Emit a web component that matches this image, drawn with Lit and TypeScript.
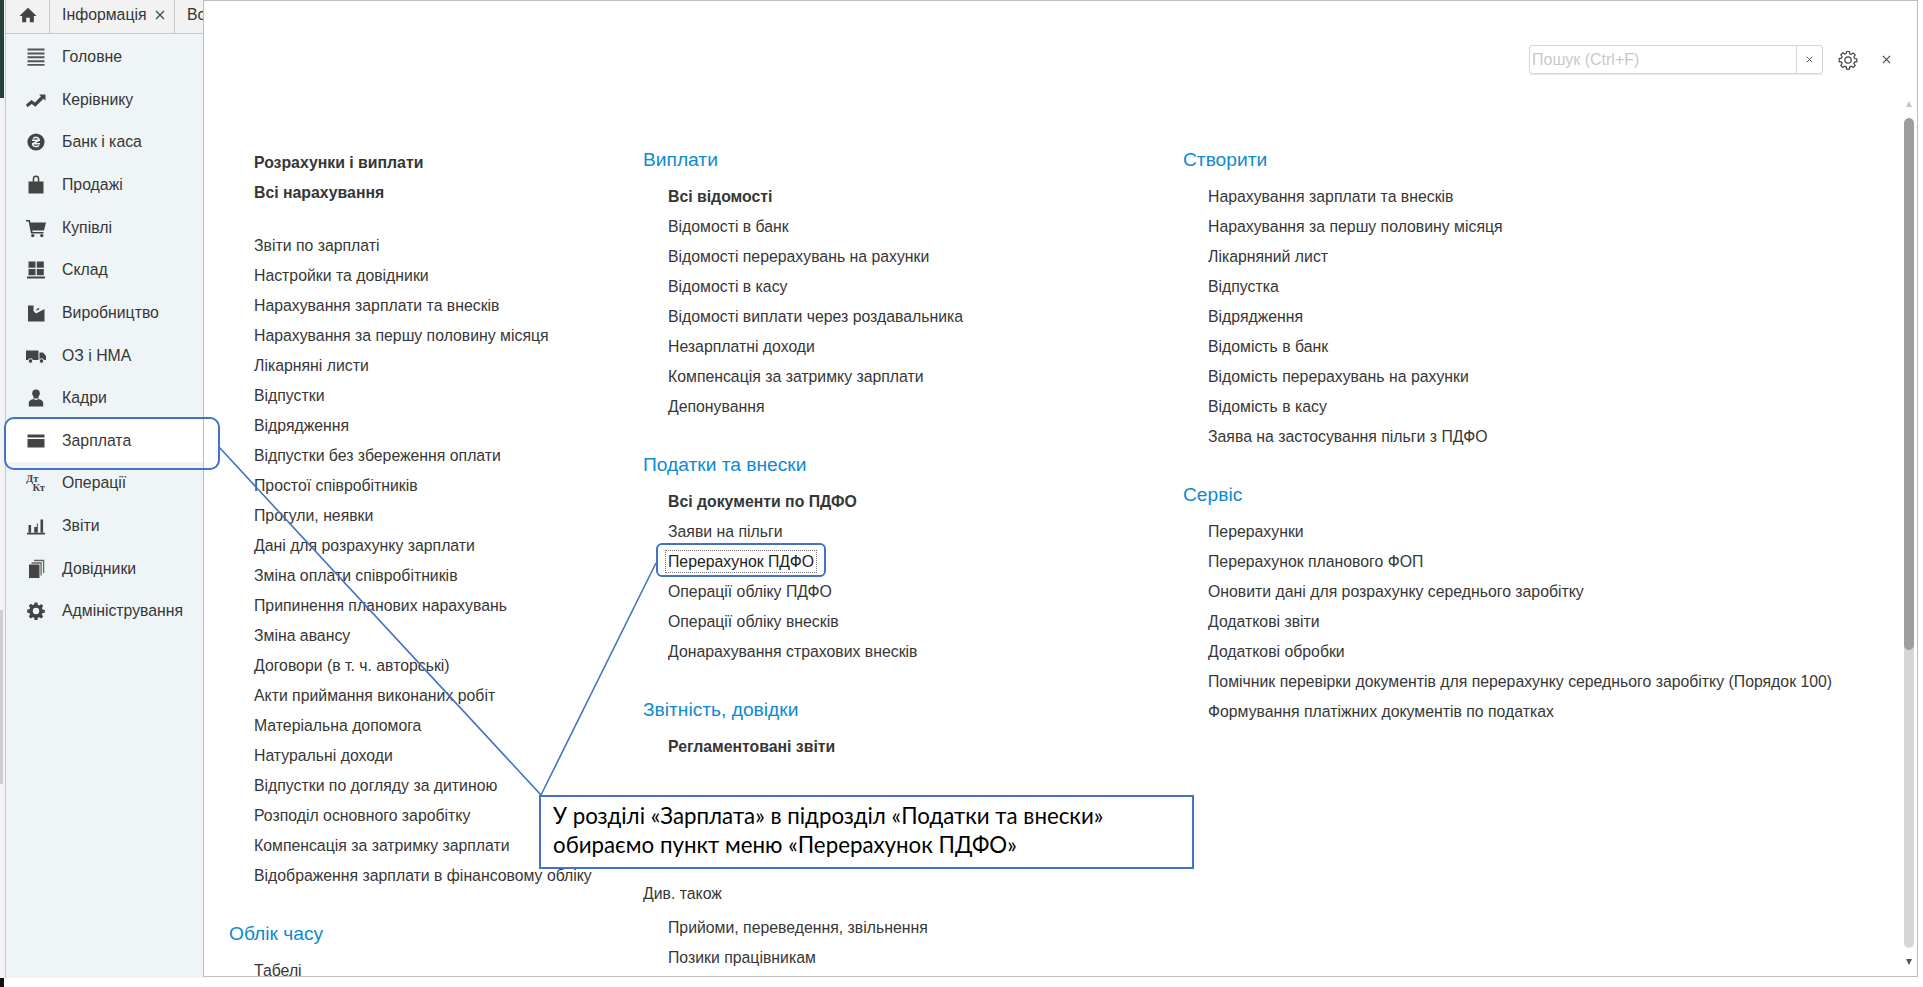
import { LitElement, html, css, svg } from "lit";
import { customElement } from "lit/decorators.js";

type Item = { t: string; b?: boolean; focus?: boolean };
type Group = { h?: string; plain?: string; items: Item[]; cls?: string };

const I = (s: string): Item => ({ t: s });
const B = (s: string): Item => ({ t: s, b: true });

const gearPath = "M8.6 1.5h2.8l.4 2.3 1.5.6 1.9-1.3 2 2-1.3 1.9.6 1.5 2.3.4v2.8l-2.3.4-.6 1.5 1.3 1.9-2 2-1.9-1.3-1.5.6-.4 2.3H8.6l-.4-2.3-1.5-.6-1.9 1.3-2-2 1.3-1.9-.6-1.5-2.3-.4V8.6l2.3-.4.6-1.5-1.3-1.9 2-2 1.9 1.3 1.5-.6z";

const icons: Record<string, unknown> = {
  main: svg`<path d="M1.5 1.5h17v2h-17zM1.5 5.4h17v2h-17zM1.5 9.3h17v2h-17zM1.5 13.2h17v2h-17zM1.5 17h17v1.8h-17z" opacity=".9"/>`,
  trend: svg`<path d="M0 14.5l5.5-4.5 3.5 2.5 6-6.2-2-1.8h6.5v6.3l-2-2-8.2 8-3.6-2.7-4.2 3.2z"/>`,
  bank: svg`<circle cx="10" cy="10" r="8.6"/><path d="M6 8.2h8M6 11.8h8M7.2 6.6c1.4-2 5.8-1.6 5.6 1.2-.2 2.2-5.8 2.2-6 4.6-.1 2.6 4.6 2.8 6.2 1" fill="none" stroke="#eff4f7" stroke-width="1.5"/>`,
  bag: svg`<path d="M2.5 6.5h4.2V3.8a3.3 3.3 0 0 1 6.6 0v2.7h4.2v12h-15zM8.2 6.5h3.6V3.9a1.8 1.8 0 0 0-3.6 0z"/>`,
  cart: svg`<path d="M0 2h3.8l.7 2.4H20l-2 8H6.2l.5 1.6H17.5v1.6H5L2.6 3.6H0z"/><circle cx="6.8" cy="17.6" r="1.7"/><circle cx="15.8" cy="17.6" r="1.7"/>`,
  boxes: svg`<path d="M2.5 1.5h7v6.2h-7zM10.8 1.5h7v6.2h-7zM2.5 9h7v6.2h-7zM10.8 9h7v6.2h-7zM1 16.6h18v1.9H1z"/>`,
  factory: svg`<path d="M2 18.5V2.5h5.5v5.5L10 10.5 18.5 6v12.5z"/><path d="M10.5 6.2l2.6-1.4v1.6l-2.6 1.4z"/>`,
  truck: svg`<path d="M0 4.5h12.5v9.5H0zM13.5 6.5h3.5l3 3.6V14h-6.5z"/><circle cx="4.5" cy="15" r="2.3" stroke="#eff4f7"/><circle cx="15.5" cy="15" r="2.3" stroke="#eff4f7"/>`,
  person: svg`<circle cx="10" cy="5.2" r="3.8"/><path d="M7.5 8h5v2.4h-5zM2.8 18.5v-3.5c0-2.5 2.8-3.6 4.8-4L10 12.2l2.4-1.2c2 .4 4.8 1.5 4.8 4v3.5z"/>`,
  card: svg`<path d="M1.5 3.5h17v3h-17zM1.5 8h17v8.5h-17z"/>`,
  reports: svg`<path d="M2.5 9h2.6v7.5H2.5zM8.2 11h2.6v5.5H8.2zM10.8 7.5h1v9h-1zM14.5 3.5h2.6v13h-2.6zM1 16.8h18v1.6H1z"/>`,
  pages: svg`<path d="M3 5.5h10.5V19H3z"/><path d="M5.5 4h9.6v12.5M8 1.5h9.6V14" fill="none" stroke="#666" stroke-width="1.3"/>`,
  gear: svg`<path fill-rule="evenodd" d="${gearPath} M10 6.8a3.2 3.2 0 1 0 0 6.4 3.2 3.2 0 0 0 0-6.4z"/>`,
  dtkt: svg`<text x="0" y="8.5" class="dk">Дт</text><text x="6.5" y="18" class="dk">Кт</text>`,
};

const nav: [string, string, boolean?][] = [
  ["Головне", "main"], ["Керівнику", "trend"], ["Банк і каса", "bank"], ["Продажі", "bag"],
  ["Купівлі", "cart"], ["Склад", "boxes"], ["Виробництво", "factory"], ["ОЗ і НМА", "truck"],
  ["Кадри", "person"], ["Зарплата", "card", true], ["Операції", "dtkt"], ["Звіти", "reports"],
  ["Довідники", "pages"], ["Адміністрування", "gear"],
];

const col1: Group[] = [
  { items: [B("Розрахунки і виплати"), B("Всі нарахування")], cls: "first" },
  { items: ["Звіти по зарплаті", "Настройки та довідники", "Нарахування зарплати та внесків", "Нарахування за першу половину місяця", "Лікарняні листи", "Відпустки", "Відрядження", "Відпустки без збереження оплати", "Простої співробітників", "Прогули, неявки", "Дані для розрахунку зарплати", "Зміна оплати співробітників", "Припинення планових нарахувань", "Зміна авансу", "Договори (в т. ч. авторські)", "Акти приймання виконаних робіт", "Матеріальна допомога", "Натуральні доходи", "Відпустки по догляду за дитиною", "Розподіл основного заробітку", "Компенсація за затримку зарплати", "Відображення зарплати в фінансовому обліку"].map(I) },
  { h: "Облік часу", items: [I("Табелі")] },
];
const col2: Group[] = [
  { h: "Виплати", items: [B("Всі відомості"), ...["Відомості в банк", "Відомості перерахувань на рахунки", "Відомості в касу", "Відомості виплати через роздавальника", "Незарплатні доходи", "Компенсація за затримку зарплати", "Депонування"].map(I)] },
  { h: "Податки та внески", items: [B("Всі документи по ПДФО"), I("Заяви на пільги"), { t: "Перерахунок ПДФО", focus: true }, I("Операції обліку ПДФО"), I("Операції обліку внесків"), I("Донарахування страхових внесків")] },
  { h: "Звітність, довідки", items: [B("Регламентовані звіти")] },
  { plain: "Див. також", items: [I("Прийоми, переведення, звільнення"), I("Позики працівникам")], cls: "see" },
];
const col3: Group[] = [
  { h: "Створити", items: ["Нарахування зарплати та внесків", "Нарахування за першу половину місяця", "Лікарняний лист", "Відпустка", "Відрядження", "Відомість в банк", "Відомість перерахувань на рахунки", "Відомість в касу", "Заява на застосування пільги з ПДФО"].map(I) },
  { h: "Сервіс", items: ["Перерахунки", "Перерахунок планового ФОП", "Оновити дані для розрахунку середнього заробітку", "Додаткові звіти", "Додаткові обробки", "Помічник перевірки документів для перерахунку середнього заробітку (Порядок 100)", "Формування платіжних документів по податках"].map(I) },
];

@customElement("app-root")
export class AppRoot extends LitElement {
  static styles = css`
    :host { display: block; position: relative; width: 1923px; height: 987px; overflow: hidden; background: #fff;
      font-family: "Liberation Sans", Arial, sans-serif; font-size: 15.82px; color: #363636; }
    .shell { display: flex; height: 987px; }
    .strip { width: 5px; flex: none; height: 978px; display: flex; flex-direction: column; background: #f3f3f3; position: relative; }
    .strip .dark { height: 98px; width: 4px; background: #26403c; }
    .strip .mid { height: 512px; }
    .strip .low { width: 3px; height: 174px; background: #cfcfcf; }
    .strip .end { position: absolute; left: 0; top: 978px; width: 4px; height: 9px; background: #111; }
    .left { width: 198px; flex: none; display: flex; flex-direction: column; height: 978px; border-left: 1px solid #c8c8c8; box-sizing: border-box; }
    .tabs { display: flex; height: 34px; flex: none; background: #f2f2f2; border-bottom: 1px solid #c9c9c9; box-sizing: border-box; overflow: hidden; }
    .tab { display: flex; align-items: center; border-right: 1px solid #c9c9c9; box-sizing: border-box; flex: none; white-space: nowrap; padding-bottom: 4px; }
    .tab.home { width: 44px; justify-content: center; }
    .tab.info { width: 125px; padding-left: 12px; justify-content: space-between; padding-right: 9px; }
    .tab.next { padding-left: 12px; border-right: none; }
    .nav { flex: 1; background: #eff4f7; padding-top: 1.6px; }
    .row { height: 42.67px; display: flex; align-items: center; box-sizing: border-box; padding-left: 20px; gap: 16px; }
    .row.on { background: #fff; }
    .ico { width: 20px; height: 20px; fill: #444; flex: none; }
    .ico .dk { font-family: "Liberation Serif", serif; font-size: 10.5px; font-weight: bold; fill: #444; }
    .panel { flex: none; width: 1715px; height: 977px; box-sizing: border-box; border: 1px solid #bdbdbd; background: #fff; position: relative; overflow: hidden; display: flex; flex-direction: column; }
    .bar { display: flex; justify-content: flex-end; align-items: center; height: 29px; margin-top: 44px; padding-right: 23px; flex: none; }
    .search { display: flex; width: 294px; height: 29px; border: 1px solid #d6d6d6; border-radius: 3px; box-sizing: border-box; align-items: center; box-shadow: 0 1px 1px #e6e6e6; }
    .ph { flex: 1; font-size: 16px; color: #c9c9c9; padding-left: 2px; }
    .sx { width: 25px; height: 100%; border-left: 1px solid #d6d6d6; display: flex; align-items: center; justify-content: center; }
    .gear { width: 20px; height: 20px; margin-left: 15px; fill: none; stroke: #444; stroke-width: 1.2; }
    .close { margin-left: 20px; width: 16px; height: 16px; display: flex; align-items: center; justify-content: center; }
    .cols { display: flex; padding-left: 25px; padding-top: 65px; flex: none; }
    .col { flex: none; }
    .col.c1 { width: 414px; padding-top: 9px; }
    .col.c2 { width: 540px; }
    .group { margin-bottom: 22px; }
    .group.first { margin-bottom: 23px; }
    .group.see { margin-top: 117px; }
    h3 { margin: 0; height: 43px; line-height: 42px; font-size: 19.2px; font-weight: normal; color: #0d8ad0; white-space: nowrap; }
    .item { height: 30px; line-height: 30px; padding-left: 25px; white-space: nowrap; }
    .item.b { font-weight: bold; }
    .plain { height: 34px; line-height: 30px; white-space: nowrap; }
    .focus { outline: 1px dotted #777; padding: 2px 2px; margin-left: -2px; color: #222; }
    .sb { position: absolute; right: 3px; top: 117px; bottom: 28px; width: 10px; border-radius: 5px; background: #d6d6d6; overflow: hidden; }
    .sb i { display: block; height: 532px; background: #9e9e9e; border-radius: 5px; }
    .arr { position: absolute; right: 5px; width: 0; height: 0; border-left: 3px solid transparent; border-right: 3px solid transparent; }
    .arr.up { top: 100px; border-bottom: 6px solid #c4c4c4; }
    .arr.down { top: 958px; border-top: 6px solid #555; }
    .lines { position: absolute; left: 0; top: 0; pointer-events: none; }
    .note { position: absolute; left: 539px; top: 795px; width: 655px; height: 74px; box-sizing: border-box; border: 2px solid #4472c4; background: #fff; padding: 5px 12px; font-family: Lato, sans-serif; font-size: 22.3px; line-height: 28.5px; color: #000; white-space: nowrap; }
    .hl { position: absolute; box-sizing: border-box; border: 2px solid #4472c4; pointer-events: none; }
    .hl.a { left: 4px; top: 417px; width: 216px; height: 53px; border-radius: 10px; }
    .hl.b { left: 656px; top: 543px; width: 170px; height: 34px; border-radius: 6px; }
  `;

  private x(size: number, color = "#444") {
    return html`<svg width=${size} height=${size} viewBox="0 0 10 10" fill="none" stroke=${color} stroke-width="1.2"><path d="M1 1l8 8M9 1l-8 8"/></svg>`;
  }

  private groups(gs: Group[]) {
    return gs.map((g) => html`<div class="group ${g.cls ?? ""}">
      ${g.h ? html`<h3>${g.h}</h3>` : ""}
      ${g.plain ? html`<div class="plain">${g.plain}</div>` : ""}
      ${g.items.map((i) => html`<div class="item ${i.b ? "b" : ""}">${i.focus ? html`<span class="focus">${i.t}</span>` : i.t}</div>`)}
    </div>`);
  }

  render() {
    return html`
      <div class="shell">
        <div class="strip"><div class="dark"></div><div class="mid"></div><div class="low"></div><div class="end"></div></div>
        <div class="left">
          <div class="tabs">
            <div class="tab home"><svg width="18" height="18" viewBox="0 0 20 20" fill="#444"><path d="M10 2L0.5 11h3v7h4.5v-5h4v5h4.5v-7h3z"/></svg></div>
            <div class="tab info"><span>Інформація</span>${this.x(10)}</div>
            <div class="tab next">Все</div>
          </div>
          <div class="nav">
            ${nav.map(([t, ic, on]) => html`<div class="row ${on ? "on" : ""}"><svg class="ico" viewBox="0 0 20 20">${icons[ic]}</svg><span>${t}</span></div>`)}
          </div>
        </div>
        <div class="panel">
          <div class="bar">
            <div class="search"><span class="ph">Пошук (Ctrl+F)</span><span class="sx">${this.x(7)}</span></div>
            <svg class="gear" viewBox="0 0 20 20"><path d="${gearPath}"/><circle cx="10" cy="10" r="3.2"/></svg>
            <span class="close">${this.x(9)}</span>
          </div>
          <div class="cols">
            <div class="col c1">${this.groups(col1)}</div>
            <div class="col c2">${this.groups(col2)}</div>
            <div class="col c3">${this.groups(col3)}</div>
          </div>
          <div class="sb"><i></i></div>
          <div class="arr up"></div>
          <div class="arr down"></div>
        </div>
      </div>
      <svg class="lines" width="1923" height="987"><path d="M219 447L541 795M656 563L541 795" fill="none" stroke="#4472c4" stroke-width="1.6"/></svg>
      <div class="hl a"></div>
      <div class="hl b"></div>
      <div class="note">У розділі «Зарплата» в підрозділ «Податки та внески»<br />обираємо пункт меню «Перерахунок ПДФО»</div>
    `;
  }
}
